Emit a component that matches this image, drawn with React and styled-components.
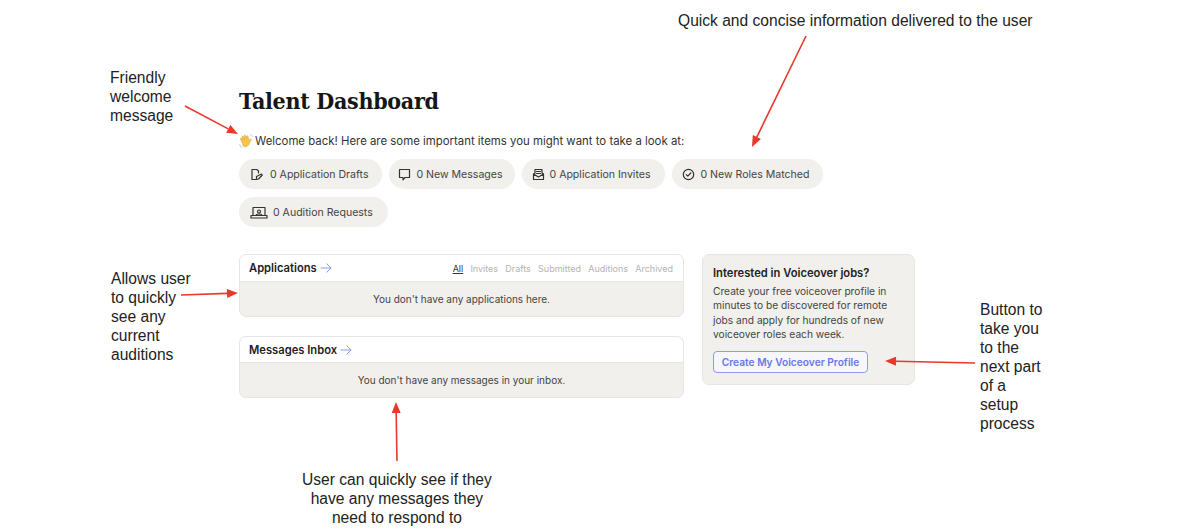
import React from "react";
import styled, { createGlobalStyle } from "styled-components";

const Global = createGlobalStyle`
  html, body { margin: 0; padding: 0; background: #fff; }
  body { width: 1190px; height: 530px; overflow: hidden; position: relative; font-family: Inter, "Noto Sans", sans-serif; color: #2b2b2b; }
`;

const Page = styled.main`
  width: 1190px;
  height: 530px;
  box-sizing: border-box;
  padding: 86px 0 0 239px;
  position: relative;
`;
const Title = styled.h1`
  margin: 0;
  font: 700 23px/30px "DejaVu Serif Condensed", "DejaVu Serif", serif;
  font-stretch: condensed;
  letter-spacing: -0.3px;
  color: #161616;
`;
const Welcome = styled.p`
  margin: 15px 0 0;
  display: flex;
  align-items: center;
  gap: 1px;
  font-size: 11.4px;
  line-height: 20px;
  color: #333;
  white-space: nowrap;
`;
const Pills = styled.div`
  margin-top: 8px;
  width: 620px;
  display: flex;
  flex-wrap: wrap;
  gap: 8px 7px;
`;
const Pill = styled.div`
  height: 30px;
  box-sizing: border-box;
  padding: 0 ${(p) => p.$pr || 14}px 0 ${(p) => p.$pl || 9}px;
  border-radius: 15px;
  background: #f1f0ec;
  display: flex;
  align-items: center;
  gap: ${(p) => p.$gap || 4}px;
  font-size: 10.55px;
  color: #444;
  white-space: nowrap;
`;
const Columns = styled.div`
  margin-top: 27px;
  display: flex;
  gap: 18px;
  align-items: flex-start;
`;
const Left = styled.div`
  width: 445px;
  display: flex;
  flex-direction: column;
  gap: 19px;
`;
const Card = styled.section`
  box-sizing: border-box;
  border: 1px solid #e6e5e1;
  border-radius: 7px;
  overflow: hidden;
  background: #f1f0ec;
`;
const CardHead = styled.header`
  height: ${(p) => p.$h || 27}px;
  box-sizing: border-box;
  padding: 0 10px 0 9px;
  background: #fff;
  border-bottom: 1px solid #e6e5e1;
  display: flex;
  align-items: center;
  justify-content: space-between;
`;
const CardTitle = styled.h2`
  margin: 0;
  display: flex;
  align-items: center;
  gap: 3px;
  font-size: 11.2px;
  font-weight: 600;
  color: #1d1d1d;
`;
const Tabs = styled.nav`
  display: flex;
  gap: 7.2px;
  font-size: 9px;
  padding-top: 1px;
`;
const Tab = styled.span`
  color: ${(p) => (p.$active ? "#333" : "#b4b4b0")};
  text-decoration: ${(p) => (p.$active ? "underline" : "none")};
`;
const Empty = styled.div`
  height: 34px;
  display: flex;
  align-items: center;
  justify-content: center;
  font-size: 10px;
  color: #444;
`;
const Side = styled.aside`
  width: 213px;
  height: 131px;
  box-sizing: border-box;
  padding: 11px 10px;
  border: 1px solid #e6e5e1;
  border-radius: 7px;
  background: #f1f0ec;
`;
const SideTitle = styled.h3`
  margin: 0;
  font-size: 11.2px;
  line-height: 14px;
  font-weight: 600;
  color: #222;
`;
const SideText = styled.p`
  margin: 4px 0 0;
  font-size: 10.2px;
  line-height: 14.3px;
  color: #444;
  white-space: pre;
`;
const Cta = styled.button`
  margin-top: 10px;
  display: block;
  width: 155px;
  height: 22px;
  padding: 0;
  border: 1.5px solid #8d9af0;
  border-radius: 4px;
  background: #f6f6fb;
  font: 600 10.2px Inter, sans-serif;
  color: #6a78e6;
  white-space: nowrap;
`;
const Note = styled.div`
  position: absolute;
  left: ${(p) => p.$x}px;
  top: ${(p) => p.$y}px;
  font: 15.6px/19px "Liberation Sans", Arial, sans-serif;
  color: #222;
  white-space: pre;
  text-align: ${(p) => p.$align || "left"};
`;
const ArrowLayer = styled.svg`
  position: absolute;
  left: 0;
  top: 0;
  pointer-events: none;
`;

const Ico = ({ children, w = 15 }) => (
  <svg width={w} height="15" viewBox={`0 0 ${w} 15`} fill="none" stroke="#333" strokeWidth="1.2" strokeLinecap="round" strokeLinejoin="round">
    {children}
  </svg>
);

const Hand = () => (
  <svg width="15" height="15" viewBox="0 0 14 14">
    <g fill="none" stroke="#bdbdbd" strokeWidth=".8"><path d="M.6 9.500q.3 2 1.800 3.400M10.500 .6q1.600.5 2.400 2" /></g>
    <path d="M2.600 7.400 1.300 4.800c-.4-.9.900-1.500 1.400-.6l1.100 1.800-1.100-3c-.3-1 1-1.500 1.400-.6l1.200 2.800-.6-3.200c-.2-1 1.200-1.300 1.500-.3l1 3-.1-2.300c0-1 1.300-1.100 1.500-.1l.5 3.600 1.100-1c.7-.7 1.700 0 1.100.8l-2 4.100c-1.200 2.300-4.200 2.800-5.900 1.200C3.600 9.900 3.200 8.600 2.600 7.400z" fill="#f6c44f" stroke="#dc9f33" strokeWidth=".4" />
  </svg>
);

const Arrow = ({ x1, y1, x2, y2 }) => {
  const a = Math.atan2(y2 - y1, x2 - x1);
  const l = 11, s = 4.5;
  const bx = x2 - l * Math.cos(a), by = y2 - l * Math.sin(a);
  const pts = [
    [x2, y2],
    [bx - s * Math.sin(a), by + s * Math.cos(a)],
    [bx + s * Math.sin(a), by - s * Math.cos(a)],
  ].map((p) => p.map((n) => n.toFixed(1)).join(",")).join(" ");
  return (
    <g>
      <line x1={x1} y1={y1} x2={bx} y2={by} stroke="#e8392c" strokeWidth="1.6" />
      <polygon points={pts} fill="#e8392c" />
    </g>
  );
};

const BlueArrow = () => (
  <svg width="12" height="10" viewBox="0 0 12 10" fill="none" stroke="#8c99f2" strokeWidth="1" strokeLinecap="round" strokeLinejoin="round">
    <path d="M1 5h10M6.800 .8 11 5 6.800 9.200" />
  </svg>
);

const tabs = ["All", "Invites", "Drafts", "Submitted", "Auditions", "Archived"];

export default function App() {
  return (
    <Page>
      <Global />
      <Title>Talent Dashboard</Title>
      <Welcome><Hand />Welcome back! Here are some important items you might want to take a look at:</Welcome>
      <Pills>
        <Pill $pl={10} $gap={5}>
          <Ico w={16}><path d="M9.500 4 7.800 2.500H3v10h5M7.500 9.500l5-2.500.8 1-3.800 4-2 .3zM9.500 4v2" /></Ico>
          0 Application Drafts
        </Pill>
        <Pill $pl={8} $pr={12}>
          <Ico><path d="M2.500 2.500h10v8h-4.500L6 12.800V10.500H2.500z" /></Ico>
          0 New Messages
        </Pill>
        <Pill $pr={15}>
          <Ico><path d="M4 6V2.500h7V6M2.500 7l5 3 5-3v5.500h-10zM5.500 4.500h4M5.500 6.500h4M2.500 7 4 6M12.500 7 11 6" /></Ico>
          0 Application Invites
        </Pill>
        <Pill>
          <Ico><circle cx="7.500" cy="7.500" r="5.200" /><path d="m5.200 7.600 1.600 1.600 3-3.200" /></Ico>
          0 New Roles Matched
        </Pill>
        <Pill $pl={11} $gap={5} $pr={15}>
          <Ico w={18}><path d="M3 10.500V2.500h12v8M1 10.500h16v2.500H1zM7.500 6.500a1.500 1.500 0 1 0 3 0 1.500 1.500 0 1 0-3 0M6 10.500c0-2 6-2 6 0" /></Ico>
          0 Audition Requests
        </Pill>
      </Pills>
      <Columns>
        <Left>
          <Card>
            <CardHead>
              <CardTitle>Applications <BlueArrow /></CardTitle>
              <Tabs>{tabs.map((t, i) => <Tab key={t} $active={i === 0}>{t}</Tab>)}</Tabs>
            </CardHead>
            <Empty>You don't have any applications here.</Empty>
          </Card>
          <Card>
            <CardHead $h={26}>
              <CardTitle>Messages Inbox <BlueArrow /></CardTitle>
            </CardHead>
            <Empty>You don't have any messages in your inbox.</Empty>
          </Card>
        </Left>
        <Side>
          <SideTitle>Interested in Voiceover jobs?</SideTitle>
          <SideText>{"Create your free voiceover profile in\nminutes to be discovered for remote\njobs and apply for hundreds of new\nvoiceover roles each week."}</SideText>
          <Cta>Create My Voiceover Profile</Cta>
        </Side>
      </Columns>

      <Note $x={678} $y={11}>Quick and concise information delivered to the user</Note>
      <Note $x={110} $y={68}>{"Friendly\nwelcome\nmessage"}</Note>
      <Note $x={111} $y={269}>{"Allows user\nto quickly\nsee any\ncurrent\nauditions"}</Note>
      <Note $x={980} $y={300}>{"Button to\ntake you\nto the\nnext part\nof a\nsetup\nprocess"}</Note>
      <Note $x={302} $y={470} $align="center">{"User can quickly see if they\nhave any messages they\nneed to respond to"}</Note>

      <ArrowLayer width="1190" height="530">
        <Arrow x1={185} y1={106} x2={238} y2={134} />
        <Arrow x1={806} y1={36} x2={752} y2={147} />
        <Arrow x1={181} y1={295} x2={238} y2={293} />
        <Arrow x1={975} y1={363} x2={885} y2={361} />
        <Arrow x1={397} y1={461} x2={396} y2={402} />
      </ArrowLayer>
    </Page>
  );
}
